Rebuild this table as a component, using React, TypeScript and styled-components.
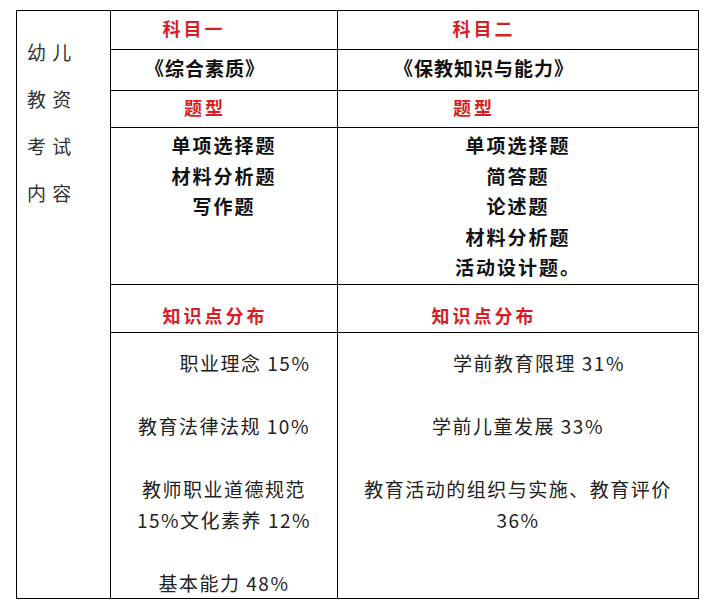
import React from 'react';
import styled, { createGlobalStyle } from 'styled-components';

const GlobalStyle = createGlobalStyle`
  html, body {
    margin: 0;
    padding: 0;
    background: #fff;
  }
  body {
    font-family: "Noto Sans CJK SC", "Liberation Sans", sans-serif;
    color: #111;
  }
`;

const Page = styled.div`
  padding: 10px 0 0 16px;
`;

const Table = styled.div`
  display: grid;
  grid-template-columns: 94px 227px 361px;
  grid-template-rows: 39px 41px 37px 157px 48px 266px;
  width: max-content;
  border-top: 1px solid #000;
  border-left: 1px solid #000;
`;

const Cell = styled.div<{ $shift?: number; $top?: number; $bottom?: number; $start?: boolean }>`
  display: flex;
  flex-direction: column;
  align-items: center;
  justify-content: ${(p) => (p.$start ? 'flex-start' : 'center')};
  box-sizing: border-box;
  border-right: 1px solid #000;
  border-bottom: 1px solid #000;
  padding-right: ${(p) => p.$shift ?? 0}px;
  padding-top: ${(p) => p.$top ?? 0}px;
  padding-bottom: ${(p) => p.$bottom ?? 0}px;
`;

const SideCell = styled.div`
  grid-row: 1 / -1;
  box-sizing: border-box;
  border-right: 1px solid #000;
  border-bottom: 1px solid #000;
  padding: 17px 0 0 10px;
`;

const SideLine = styled.div`
  font-size: 19px;
  line-height: 47px;
  letter-spacing: 1px;
  color: #333;
  white-space: pre;
`;

const Heading = styled.div`
  font-size: 18px;
  font-weight: 700;
  letter-spacing: 3px;
  color: #d81e24;
  line-height: 1;
`;

const BookTitle = styled.div`
  font-size: 19px;
  font-weight: 700;
  letter-spacing: 1px;
  color: #111;
  line-height: 1;
`;

const TypeList = styled.div`
  font-size: 19px;
  font-weight: 700;
  letter-spacing: 2px;
  line-height: 30.5px;
  color: #111;
  text-align: center;
`;

const Para = styled.div<{ $indent?: boolean }>`
  font-family: "Liberation Sans Narrow", "Noto Sans CJK SC", sans-serif;
  font-size: 19px;
  font-weight: 400;
  letter-spacing: 1.5px;
  line-height: 31.4px;
  color: #222;
  text-align: center;
  margin-bottom: 31.4px;
  padding-left: ${(p) => (p.$indent ? 42 : 0)}px;
`;

export default function App() {
  return (
    <Page>
      <GlobalStyle />
      <Table>
        <SideCell>
          <SideLine>幼 儿</SideLine>
          <SideLine>教 资</SideLine>
          <SideLine>考 试</SideLine>
          <SideLine>内 容</SideLine>
        </SideCell>

        <Cell $shift={60} $bottom={4}>
          <Heading>科目一</Heading>
        </Cell>
        <Cell $shift={68} $bottom={4}>
          <Heading>科目二</Heading>
        </Cell>

        <Cell $shift={38} $bottom={6}>
          <BookTitle>《综合素质》</BookTitle>
        </Cell>
        <Cell $shift={68} $bottom={6}>
          <BookTitle>《保教知识与能力》</BookTitle>
        </Cell>

        <Cell $shift={38} $bottom={4}>
          <Heading>题型</Heading>
        </Cell>
        <Cell $shift={88} $bottom={4}>
          <Heading>题型</Heading>
        </Cell>

        <Cell $start $top={2}>
          <TypeList>
            单项选择题
            <br />
            材料分析题
            <br />
            写作题
          </TypeList>
        </Cell>
        <Cell $start $top={2}>
          <TypeList>
            单项选择题
            <br />
            简答题
            <br />
            论述题
            <br />
            材料分析题
            <br />
            活动设计题。
          </TypeList>
        </Cell>

        <Cell $shift={18} $top={13}>
          <Heading>知识点分布</Heading>
        </Cell>
        <Cell $shift={68} $top={13}>
          <Heading>知识点分布</Heading>
        </Cell>

        <Cell $start $top={14}>
          <Para $indent>职业理念 15%</Para>
          <Para>教育法律法规 10%</Para>
          <Para>
            教师职业道德规范
            <br />
            15%文化素养 12%
          </Para>
          <Para>基本能力 48%</Para>
        </Cell>
        <Cell $start $top={14}>
          <Para $indent>学前教育限理 31%</Para>
          <Para>学前儿童发展 33%</Para>
          <Para>
            教育活动的组织与实施、教育评价
            <br />
            36%
          </Para>
        </Cell>
      </Table>
    </Page>
  );
}
